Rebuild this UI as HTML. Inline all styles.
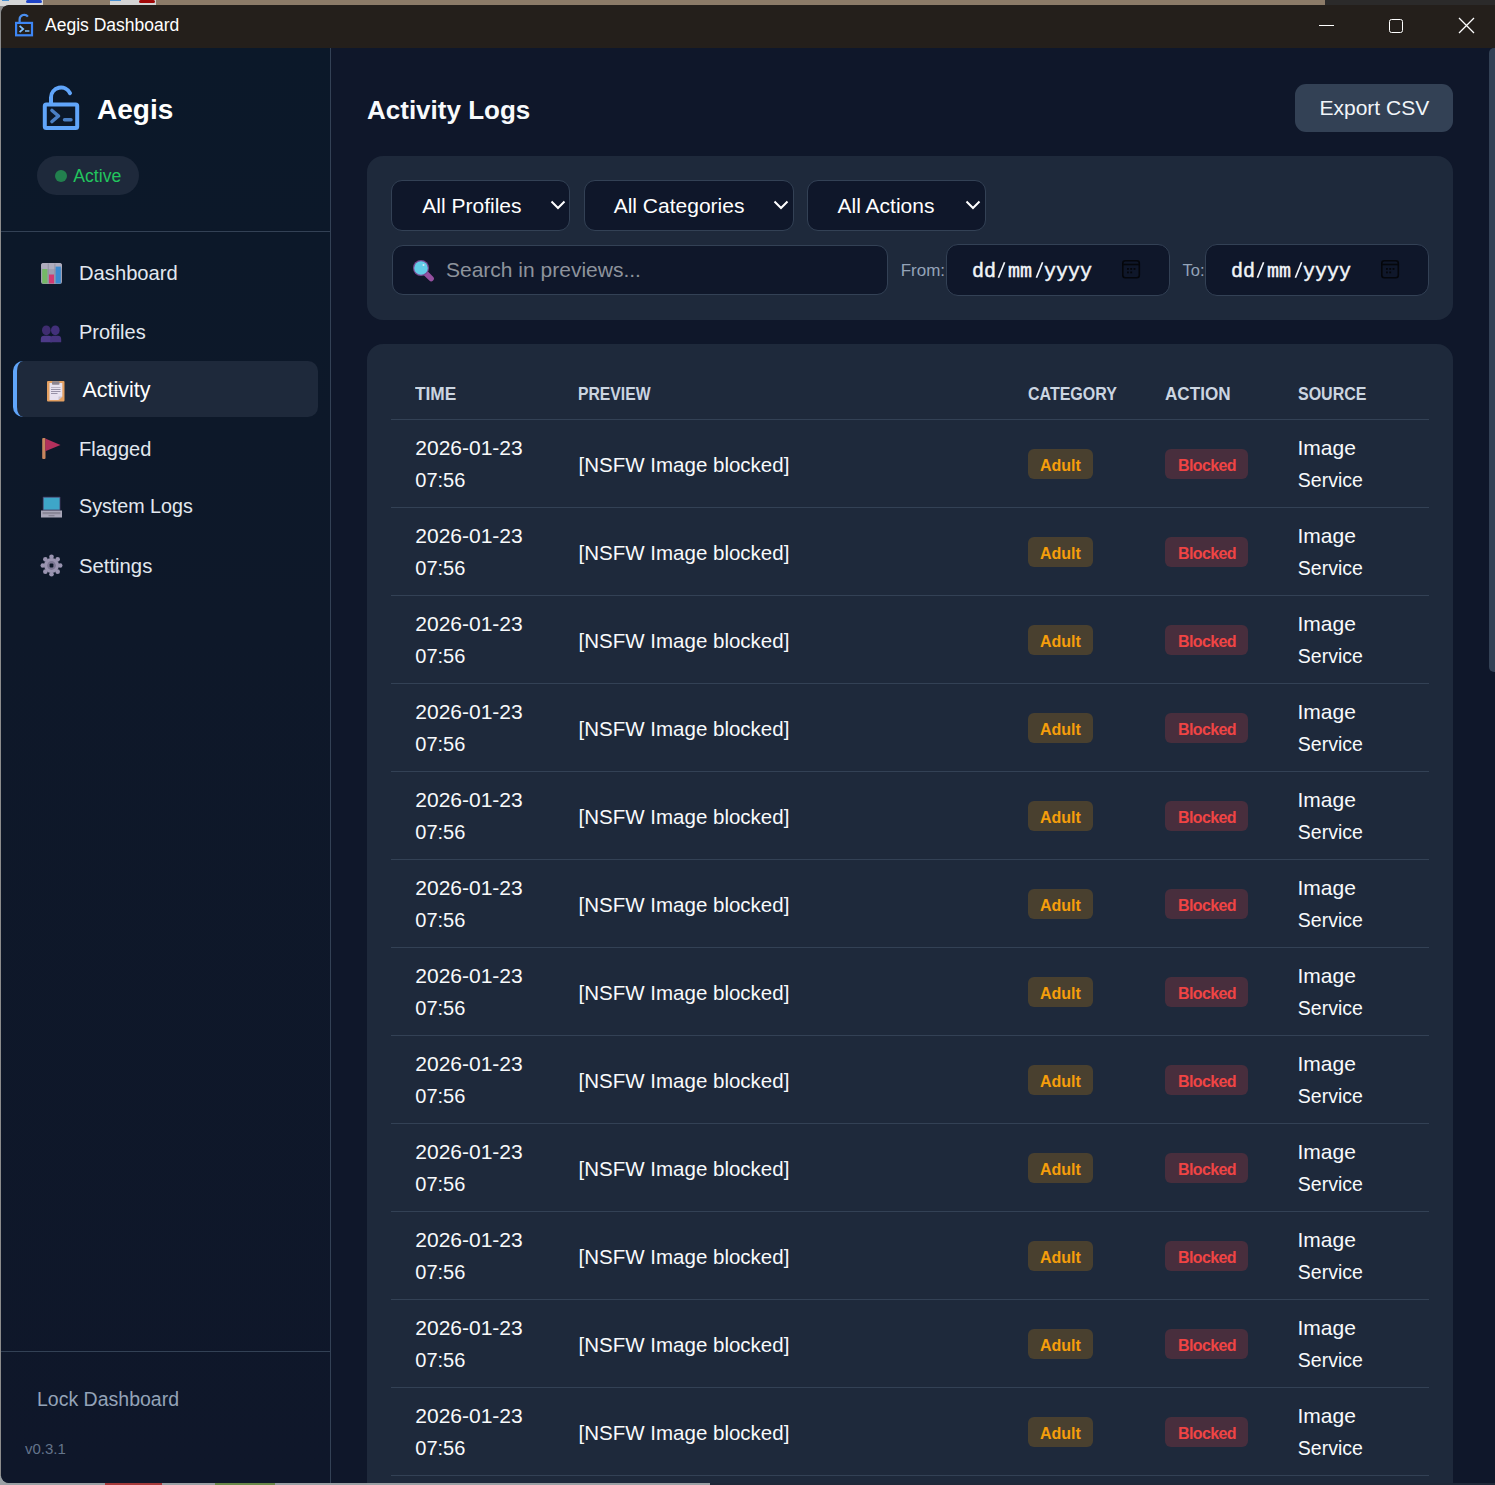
<!DOCTYPE html>
<html><head><meta charset="utf-8"><title>Aegis Dashboard</title>
<style>
html,body{margin:0;padding:0;}
body{width:1495px;height:1485px;position:relative;overflow:hidden;background:#8c8c8c;font-family:"Liberation Sans", sans-serif;}
.t{position:absolute;line-height:1;white-space:nowrap;}
.r{position:absolute;}
.a{position:absolute;overflow:visible;}
.sl{display:inline-block;width:12px;text-align:center;font-size:16px;vertical-align:0.5px;-webkit-text-stroke:0.2px #f1f5f9;}
.win{position:absolute;left:0;top:0;width:1495px;height:1485px;clip-path:inset(5px 0 2px 1px round 8px 0 0 8px);}
</style></head><body>
<div class="r" style="left:0px;top:0px;width:1495px;height:6px;background:#8c7b68;border-radius:0px;"></div>
<div class="r" style="left:0px;top:0px;width:43px;height:6px;background:#d6d6d6;border-radius:0px;"></div>
<div class="r" style="left:26px;top:0px;width:16px;height:3px;background:#1f44c8;border-radius:2px;"></div>
<div class="r" style="left:2px;top:0px;width:7px;height:1px;background:#4a90d0;border-radius:0px;"></div>
<div class="r" style="left:110px;top:0px;width:46px;height:6px;background:#d4d4d4;border-radius:0px;"></div>
<div class="r" style="left:139px;top:0px;width:16px;height:3px;background:#a00808;border-radius:2px;"></div>
<div class="r" style="left:110px;top:0px;width:11px;height:1px;background:#4a90d0;border-radius:0px;"></div>
<div class="r" style="left:1325px;top:0px;width:170px;height:6px;background:#2b2a2a;border-radius:0px;"></div>
<div class="r" style="left:0px;top:1476px;width:1495px;height:9px;background:#9aa0a4;border-radius:0px;"></div>
<div class="r" style="left:105px;top:1482px;width:57px;height:3px;background:#a83a3a;border-radius:0px;"></div>
<div class="r" style="left:215px;top:1482px;width:60px;height:3px;background:#6a8a4a;border-radius:0px;"></div>
<div class="r" style="left:710px;top:1482px;width:785px;height:3px;background:#1f2838;border-radius:0px;"></div>
<div class="win">
<div class="r" style="left:1px;top:5px;width:1500px;height:1478px;background:#0f172a;border-radius:8px;"></div>
<div class="r" style="left:1px;top:5px;width:1500px;height:43px;background:#241f1b;border-radius:0px;border-radius:8px 0 0 0;"></div>
<div class="r" style="left:1px;top:48px;width:330px;height:1435px;background:linear-gradient(180deg,#0b1829,#0e1829 40%,#0f172a);border-radius:0px;"></div>
<div class="r" style="left:330px;top:48px;width:1px;height:1435px;background:#334155;border-radius:0px;"></div>
<div class="r" style="left:1px;top:231px;width:329px;height:1px;background:#334155;border-radius:0px;"></div>
<div class="r" style="left:1px;top:1351px;width:329px;height:1px;background:#334155;border-radius:0px;"></div>
<div class="t" style="left:45px;top:16.98px;font-size:17.5px;color:#ffffff;">Aegis Dashboard</div>
<svg class="a" style="left:0;top:0" width="40" height="45" viewBox="0 0 40 45">
<path d="M19.6 22.9V19.2A4.6 4.6 0 0 1 27.9 16.7" fill="none" stroke="#4a8ff0" stroke-width="2.2"/>
<rect x="16.1" y="22.9" width="15.9" height="12.4" fill="none" stroke="#3d86f5" stroke-width="2.2"/>
<path d="M19.6 25.8L23.2 29L19.6 32.2" fill="none" stroke="#7fc0ff" stroke-width="1.8"/>
<path d="M25 31H29.4" stroke="#7fc0ff" stroke-width="1.6"/>
</svg>
<div class="r" style="left:1319px;top:25px;width:15px;height:1.3px;background:#ffffff;border-radius:0px;"></div>
<div class="r" style="left:1388.5px;top:18.5px;width:14.5px;height:14.5px;background:transparent;border-radius:2.5px;border:1.3px solid #fff;box-sizing:border-box;"></div>
<svg class="a" style="left:1458px;top:17px" width="17" height="17" viewBox="0 0 17 17"><path d="M1 1L16 16M16 1L1 16" stroke="#fff" stroke-width="1.3"/></svg>
<svg class="a" style="left:38px;top:80px" width="46" height="55" viewBox="38 80 46 55">
<path d="M51 103V97.5A10 10 0 0 1 70 93.2" fill="none" stroke="#60a5fa" stroke-width="4" stroke-linecap="round"/>
<rect x="44.8" y="104.5" width="32.4" height="23.6" rx="1.5" fill="none" stroke="#60a5fa" stroke-width="4"/>
<path d="M52 110.5L58.5 116L52 121.5" fill="none" stroke="#4a7fc4" stroke-width="3.6" stroke-linecap="round" stroke-linejoin="round"/>
<path d="M64.5 119.8H71" stroke="#4a7fc4" stroke-width="3.4" stroke-linecap="round"/>
</svg>
<div class="t" style="left:97px;top:96.29px;font-size:28px;color:#ffffff;font-weight:700;">Aegis</div>
<div class="r" style="left:37px;top:156px;width:102px;height:39px;background:#1e293b;border-radius:19.5px;"></div>
<div class="r" style="left:55px;top:170px;width:12px;height:12px;background:#22804e;border-radius:6px;"></div>
<div class="t" style="left:73.3px;top:168.10px;font-size:17.6px;color:#22c55e;">Active</div>
<div class="r" style="left:13px;top:361px;width:305px;height:56px;background:#1e293b;border-radius:10px;border-left:4px solid #60a5fa;box-sizing:border-box;"></div>
<div class="t" style="left:79px;top:263.10px;font-size:20.2px;color:#e2e8f0;">Dashboard</div>
<div class="t" style="left:79px;top:322.07px;font-size:20px;color:#e2e8f0;">Profiles</div>
<div class="t" style="left:82.5px;top:379.80px;font-size:21.5px;color:#ffffff;">Activity</div>
<div class="t" style="left:79px;top:438.77px;font-size:20px;color:#e2e8f0;">Flagged</div>
<div class="t" style="left:79px;top:497.32px;font-size:19.7px;color:#e2e8f0;">System Logs</div>
<div class="t" style="left:79px;top:555.81px;font-size:20.3px;color:#e2e8f0;">Settings</div>
<svg class="a" style="left:40px;top:262px" width="23" height="23" viewBox="0 0 23 23">
<rect x="1" y="1" width="21" height="21" rx="2.5" fill="#a09eb0"/>
<rect x="1" y="1" width="21" height="6" rx="2.5" fill="#aeacbd"/>
<rect x="7.8" y="1.5" width="0.8" height="20" fill="#8d8b9d"/><rect x="14.5" y="1.5" width="0.8" height="20" fill="#8d8b9d"/>
<rect x="2.2" y="7" width="5.2" height="14.5" fill="#74b866"/>
<rect x="9" y="12.5" width="5" height="9" fill="#d23a72"/>
<rect x="15.6" y="4.6" width="5.2" height="16.9" fill="#3a8ad0"/>
</svg>
<svg class="a" style="left:40px;top:325px" width="23" height="19" viewBox="0 0 23 19">
<ellipse cx="6.3" cy="5.3" rx="4.3" ry="4.9" fill="#3f2d70"/><ellipse cx="15.3" cy="5.3" rx="4.3" ry="4.9" fill="#42307a"/>
<path d="M0.8 17.3V14.2A3.4 3.4 0 0 1 4.2 10.8H8.6A3.4 3.4 0 0 1 12 14.2V17.3Z" fill="#4d3a88"/>
<path d="M10.2 17.3V14.2A3.4 3.4 0 0 1 13.6 10.8H17.8A3.4 3.4 0 0 1 21.2 14.2V17.3Z" fill="#46347e"/>
</svg>
<svg class="a" style="left:46px;top:379px" width="20" height="24" viewBox="0 0 20 24">
<rect x="1" y="2" width="17.5" height="20.5" rx="1" fill="#e3a062"/>
<path d="M3.5 4H16.3V17.5L12.5 21H3.5Z" fill="#e8e2f0"/>
<path d="M12.5 21V17.5H16.3Z" fill="#c9c4d4"/>
<rect x="6" y="2.2" width="7.5" height="3.5" rx="0.8" fill="#8d8590"/>
<rect x="5" y="8" width="9.5" height="1" fill="#b8b2c4"/><rect x="5" y="10" width="9.5" height="0.9" fill="#8f89a0"/><rect x="5" y="12" width="9.5" height="0.9" fill="#8f89a0"/><rect x="5" y="14" width="6.5" height="0.9" fill="#8f89a0"/>
</svg>
<svg class="a" style="left:41px;top:437px" width="22" height="24" viewBox="0 0 22 24">
<rect x="1.2" y="1" width="3.3" height="21" rx="1" fill="#c7865e"/>
<path d="M4.3 1.5L19.5 8L4.3 14.3Z" fill="#b3305c"/>
</svg>
<svg class="a" style="left:40px;top:496px" width="23" height="24" viewBox="0 0 23 24">
<rect x="2.8" y="0.8" width="17.6" height="13.6" rx="0.6" fill="#4a3f6a"/>
<rect x="3.6" y="1.6" width="16" height="12" fill="#3ea6c8"/>
<path d="M1 14.5H22V21.5H1Z" fill="#a8a6b8"/>
<rect x="2.5" y="16" width="18" height="2.2" fill="#8a8898"/>
<rect x="8.5" y="19" width="6" height="1.3" fill="#888696"/>
</svg>
<svg class="a" style="left:40px;top:554px" width="23" height="23" viewBox="0 0 23 23">
<g fill="#9a94b0">
<circle cx="11.5" cy="11.5" r="7.5"/>
<circle cx="11.5" cy="2.8" r="2.3"/><circle cx="11.5" cy="20.2" r="2.3"/><circle cx="2.8" cy="11.5" r="2.3"/><circle cx="20.2" cy="11.5" r="2.3"/>
<circle cx="5.35" cy="5.35" r="2.3"/><circle cx="17.65" cy="5.35" r="2.3"/><circle cx="5.35" cy="17.65" r="2.3"/><circle cx="17.65" cy="17.65" r="2.3"/>
</g>
<circle cx="11.5" cy="11.5" r="4.4" fill="#7d7894"/>
<rect x="9.6" y="9.6" width="3.8" height="3.8" rx="1" fill="#0e1829"/>
</svg>
<div class="t" style="left:37px;top:1389.79px;font-size:19.5px;color:#94a3b8;">Lock Dashboard</div>
<div class="t" style="left:25px;top:1440.90px;font-size:15px;color:#64748b;">v0.3.1</div>
<div class="t" style="left:367px;top:96.79px;font-size:26px;color:#f8fafc;font-weight:700;">Activity Logs</div>
<div class="r" style="left:1295px;top:84px;width:158px;height:48px;background:#334155;border-radius:11px;"></div>
<div class="t" style="left:1319.5px;top:97.02px;font-size:21px;color:#f1f5f9;">Export CSV</div>
<div class="r" style="left:367px;top:156px;width:1086px;height:164px;background:#1e293b;border-radius:16px;"></div>
<div class="r" style="left:391px;top:180px;width:179px;height:50.5px;background:#0f172a;border-radius:11px;border:1px solid #334155;box-sizing:border-box;"></div>
<div class="t" style="left:422.3px;top:195.22px;font-size:21px;color:#ffffff;">All Profiles</div>
<svg class="a" style="left:549.5px;top:198px" width="16" height="14" viewBox="0 0 16 14"><path d="M1.5 3.5L8 10L14.5 3.5" fill="none" stroke="#fff" stroke-width="2"/></svg>
<div class="r" style="left:583.5px;top:180px;width:210.0px;height:50.5px;background:#0f172a;border-radius:11px;border:1px solid #334155;box-sizing:border-box;"></div>
<div class="t" style="left:613.7px;top:195.22px;font-size:21px;color:#ffffff;">All Categories</div>
<svg class="a" style="left:773.0px;top:198px" width="16" height="14" viewBox="0 0 16 14"><path d="M1.5 3.5L8 10L14.5 3.5" fill="none" stroke="#fff" stroke-width="2"/></svg>
<div class="r" style="left:806.5px;top:180px;width:179.0px;height:50.5px;background:#0f172a;border-radius:11px;border:1px solid #334155;box-sizing:border-box;"></div>
<div class="t" style="left:837.6px;top:195.22px;font-size:21px;color:#ffffff;">All Actions</div>
<svg class="a" style="left:965.0px;top:198px" width="16" height="14" viewBox="0 0 16 14"><path d="M1.5 3.5L8 10L14.5 3.5" fill="none" stroke="#fff" stroke-width="2"/></svg>
<div class="r" style="left:391.5px;top:245px;width:496px;height:49.5px;background:#0f172a;border-radius:11px;border:1px solid #334155;box-sizing:border-box;"></div>
<svg class="a" style="left:410px;top:257px" width="26" height="26" viewBox="0 0 26 26">
<path d="M16 16.5L21.2 21.7" stroke="#9650a0" stroke-width="5.4" stroke-linecap="round"/>
<circle cx="11" cy="11" r="8" fill="#7a4a92"/>
<circle cx="11" cy="11" r="6.8" fill="#62cde8"/>
<circle cx="13.5" cy="8" r="1" fill="#d8e8f8"/>
</svg>
<div class="t" style="left:446px;top:258.97px;font-size:21px;color:#8d939c;">Search in previews...</div>
<div class="t" style="left:900.7px;top:261.51px;font-size:17px;color:#94a3b8;">From:</div>
<div class="t" style="left:1182.6px;top:261.93px;font-size:16.5px;color:#94a3b8;">To:</div>
<div class="r" style="left:945.5px;top:243.5px;width:224.0px;height:52px;background:#0f172a;border-radius:12px;border:1px solid #334155;box-sizing:border-box;"></div>
<div class="t" style="left:972px;top:261.58px;font-size:20px;color:#f1f5f9;font-family:'Liberation Mono', monospace;-webkit-text-stroke:0.45px #f1f5f9;">dd&nbsp;mm&nbsp;yyyy</div>
<svg class="a" style="left:995px;top:258px" width="12" height="24" viewBox="0 0 12 24"><path d="M9.6 4.3L3.4 19.7" stroke="#f1f5f9" stroke-width="1.7"/></svg>
<svg class="a" style="left:1033px;top:258px" width="12" height="24" viewBox="0 0 12 24"><path d="M9.6 4.3L3.4 19.7" stroke="#f1f5f9" stroke-width="1.7"/></svg>
<svg class="a" style="left:1121.2px;top:259px" width="21" height="21" viewBox="0 0 21 21">
<rect x="1.8" y="1.8" width="16.5" height="17" rx="2.5" fill="none" stroke="#05070c" stroke-width="1.6"/>
<path d="M1.8 5.5H18.3" stroke="#05070c" stroke-width="1.6"/>
<g fill="#05070c"><rect x="6" y="9" width="1.8" height="1.8"/><rect x="9.3" y="9" width="1.8" height="1.8"/><rect x="12.6" y="9" width="1.8" height="1.8"/><rect x="6" y="12.5" width="1.8" height="1.8"/><rect x="9.3" y="12.5" width="1.8" height="1.8"/></g>
</svg>
<div class="r" style="left:1204.5px;top:243.5px;width:224.0px;height:52px;background:#0f172a;border-radius:12px;border:1px solid #334155;box-sizing:border-box;"></div>
<div class="t" style="left:1231px;top:261.58px;font-size:20px;color:#f1f5f9;font-family:'Liberation Mono', monospace;-webkit-text-stroke:0.45px #f1f5f9;">dd&nbsp;mm&nbsp;yyyy</div>
<svg class="a" style="left:1254px;top:258px" width="12" height="24" viewBox="0 0 12 24"><path d="M9.6 4.3L3.4 19.7" stroke="#f1f5f9" stroke-width="1.7"/></svg>
<svg class="a" style="left:1292px;top:258px" width="12" height="24" viewBox="0 0 12 24"><path d="M9.6 4.3L3.4 19.7" stroke="#f1f5f9" stroke-width="1.7"/></svg>
<svg class="a" style="left:1380px;top:259px" width="21" height="21" viewBox="0 0 21 21">
<rect x="1.8" y="1.8" width="16.5" height="17" rx="2.5" fill="none" stroke="#05070c" stroke-width="1.6"/>
<path d="M1.8 5.5H18.3" stroke="#05070c" stroke-width="1.6"/>
<g fill="#05070c"><rect x="6" y="9" width="1.8" height="1.8"/><rect x="9.3" y="9" width="1.8" height="1.8"/><rect x="12.6" y="9" width="1.8" height="1.8"/><rect x="6" y="12.5" width="1.8" height="1.8"/><rect x="9.3" y="12.5" width="1.8" height="1.8"/></g>
</svg>
<div class="r" style="left:367px;top:344px;width:1086px;height:1200px;background:#1e293b;border-radius:16px;"></div>
<div class="t" style="left:415.3px;top:385.45px;font-size:18.6px;color:#cbd5e1;font-weight:700;transform:scaleX(0.93);transform-origin:0 0;">TIME</div>
<div class="t" style="left:577.6px;top:385.45px;font-size:18.6px;color:#cbd5e1;font-weight:700;transform:scaleX(0.845);transform-origin:0 0;">PREVIEW</div>
<div class="t" style="left:1028.3px;top:385.45px;font-size:18.6px;color:#cbd5e1;font-weight:700;transform:scaleX(0.86);transform-origin:0 0;">CATEGORY</div>
<div class="t" style="left:1165.2px;top:385.45px;font-size:18.6px;color:#cbd5e1;font-weight:700;transform:scaleX(0.92);transform-origin:0 0;">ACTION</div>
<div class="t" style="left:1297.8px;top:385.45px;font-size:18.6px;color:#cbd5e1;font-weight:700;transform:scaleX(0.86);transform-origin:0 0;">SOURCE</div>
<div class="r" style="left:391px;top:419px;width:1038px;height:1px;background:#334155;border-radius:0px;"></div>
<div class="t" style="left:415.3px;top:437.22px;font-size:21px;color:#f8fafc;">2026-01-23</div>
<div class="t" style="left:415.3px;top:470.27px;font-size:20px;color:#f8fafc;">07:56</div>
<div class="t" style="left:578.6px;top:454.84px;font-size:20.5px;color:#f8fafc;">[NSFW Image blocked]</div>
<div class="r" style="left:1028.3px;top:449px;width:64.6px;height:30.2px;background:#49402f;border-radius:6px;"></div>
<div class="t" style="left:1040px;top:458.25px;font-size:16px;color:#f59e0b;font-weight:700;">Adult</div>
<div class="r" style="left:1165.2px;top:449px;width:82.8px;height:30.2px;background:#482e3d;border-radius:6px;"></div>
<div class="t" style="left:1178px;top:458.25px;font-size:16px;color:#ef4444;font-weight:700;letter-spacing:-0.62px;">Blocked</div>
<div class="t" style="left:1297.5px;top:436.72px;font-size:21px;color:#f8fafc;">Image</div>
<div class="t" style="left:1297.8px;top:470.69px;font-size:19.5px;color:#f8fafc;">Service</div>
<div class="r" style="left:391px;top:507px;width:1038px;height:1px;background:#334155;border-radius:0px;"></div>
<div class="t" style="left:415.3px;top:525.22px;font-size:21px;color:#f8fafc;">2026-01-23</div>
<div class="t" style="left:415.3px;top:558.27px;font-size:20px;color:#f8fafc;">07:56</div>
<div class="t" style="left:578.6px;top:542.84px;font-size:20.5px;color:#f8fafc;">[NSFW Image blocked]</div>
<div class="r" style="left:1028.3px;top:537px;width:64.6px;height:30.2px;background:#49402f;border-radius:6px;"></div>
<div class="t" style="left:1040px;top:546.25px;font-size:16px;color:#f59e0b;font-weight:700;">Adult</div>
<div class="r" style="left:1165.2px;top:537px;width:82.8px;height:30.2px;background:#482e3d;border-radius:6px;"></div>
<div class="t" style="left:1178px;top:546.25px;font-size:16px;color:#ef4444;font-weight:700;letter-spacing:-0.62px;">Blocked</div>
<div class="t" style="left:1297.5px;top:524.72px;font-size:21px;color:#f8fafc;">Image</div>
<div class="t" style="left:1297.8px;top:558.69px;font-size:19.5px;color:#f8fafc;">Service</div>
<div class="r" style="left:391px;top:595px;width:1038px;height:1px;background:#334155;border-radius:0px;"></div>
<div class="t" style="left:415.3px;top:613.22px;font-size:21px;color:#f8fafc;">2026-01-23</div>
<div class="t" style="left:415.3px;top:646.27px;font-size:20px;color:#f8fafc;">07:56</div>
<div class="t" style="left:578.6px;top:630.84px;font-size:20.5px;color:#f8fafc;">[NSFW Image blocked]</div>
<div class="r" style="left:1028.3px;top:625px;width:64.6px;height:30.2px;background:#49402f;border-radius:6px;"></div>
<div class="t" style="left:1040px;top:634.25px;font-size:16px;color:#f59e0b;font-weight:700;">Adult</div>
<div class="r" style="left:1165.2px;top:625px;width:82.8px;height:30.2px;background:#482e3d;border-radius:6px;"></div>
<div class="t" style="left:1178px;top:634.25px;font-size:16px;color:#ef4444;font-weight:700;letter-spacing:-0.62px;">Blocked</div>
<div class="t" style="left:1297.5px;top:612.72px;font-size:21px;color:#f8fafc;">Image</div>
<div class="t" style="left:1297.8px;top:646.69px;font-size:19.5px;color:#f8fafc;">Service</div>
<div class="r" style="left:391px;top:683px;width:1038px;height:1px;background:#334155;border-radius:0px;"></div>
<div class="t" style="left:415.3px;top:701.22px;font-size:21px;color:#f8fafc;">2026-01-23</div>
<div class="t" style="left:415.3px;top:734.27px;font-size:20px;color:#f8fafc;">07:56</div>
<div class="t" style="left:578.6px;top:718.84px;font-size:20.5px;color:#f8fafc;">[NSFW Image blocked]</div>
<div class="r" style="left:1028.3px;top:713px;width:64.6px;height:30.2px;background:#49402f;border-radius:6px;"></div>
<div class="t" style="left:1040px;top:722.25px;font-size:16px;color:#f59e0b;font-weight:700;">Adult</div>
<div class="r" style="left:1165.2px;top:713px;width:82.8px;height:30.2px;background:#482e3d;border-radius:6px;"></div>
<div class="t" style="left:1178px;top:722.25px;font-size:16px;color:#ef4444;font-weight:700;letter-spacing:-0.62px;">Blocked</div>
<div class="t" style="left:1297.5px;top:700.72px;font-size:21px;color:#f8fafc;">Image</div>
<div class="t" style="left:1297.8px;top:734.69px;font-size:19.5px;color:#f8fafc;">Service</div>
<div class="r" style="left:391px;top:771px;width:1038px;height:1px;background:#334155;border-radius:0px;"></div>
<div class="t" style="left:415.3px;top:789.22px;font-size:21px;color:#f8fafc;">2026-01-23</div>
<div class="t" style="left:415.3px;top:822.27px;font-size:20px;color:#f8fafc;">07:56</div>
<div class="t" style="left:578.6px;top:806.84px;font-size:20.5px;color:#f8fafc;">[NSFW Image blocked]</div>
<div class="r" style="left:1028.3px;top:801px;width:64.6px;height:30.2px;background:#49402f;border-radius:6px;"></div>
<div class="t" style="left:1040px;top:810.25px;font-size:16px;color:#f59e0b;font-weight:700;">Adult</div>
<div class="r" style="left:1165.2px;top:801px;width:82.8px;height:30.2px;background:#482e3d;border-radius:6px;"></div>
<div class="t" style="left:1178px;top:810.25px;font-size:16px;color:#ef4444;font-weight:700;letter-spacing:-0.62px;">Blocked</div>
<div class="t" style="left:1297.5px;top:788.72px;font-size:21px;color:#f8fafc;">Image</div>
<div class="t" style="left:1297.8px;top:822.69px;font-size:19.5px;color:#f8fafc;">Service</div>
<div class="r" style="left:391px;top:859px;width:1038px;height:1px;background:#334155;border-radius:0px;"></div>
<div class="t" style="left:415.3px;top:877.22px;font-size:21px;color:#f8fafc;">2026-01-23</div>
<div class="t" style="left:415.3px;top:910.27px;font-size:20px;color:#f8fafc;">07:56</div>
<div class="t" style="left:578.6px;top:894.84px;font-size:20.5px;color:#f8fafc;">[NSFW Image blocked]</div>
<div class="r" style="left:1028.3px;top:889px;width:64.6px;height:30.2px;background:#49402f;border-radius:6px;"></div>
<div class="t" style="left:1040px;top:898.25px;font-size:16px;color:#f59e0b;font-weight:700;">Adult</div>
<div class="r" style="left:1165.2px;top:889px;width:82.8px;height:30.2px;background:#482e3d;border-radius:6px;"></div>
<div class="t" style="left:1178px;top:898.25px;font-size:16px;color:#ef4444;font-weight:700;letter-spacing:-0.62px;">Blocked</div>
<div class="t" style="left:1297.5px;top:876.72px;font-size:21px;color:#f8fafc;">Image</div>
<div class="t" style="left:1297.8px;top:910.69px;font-size:19.5px;color:#f8fafc;">Service</div>
<div class="r" style="left:391px;top:947px;width:1038px;height:1px;background:#334155;border-radius:0px;"></div>
<div class="t" style="left:415.3px;top:965.22px;font-size:21px;color:#f8fafc;">2026-01-23</div>
<div class="t" style="left:415.3px;top:998.27px;font-size:20px;color:#f8fafc;">07:56</div>
<div class="t" style="left:578.6px;top:982.84px;font-size:20.5px;color:#f8fafc;">[NSFW Image blocked]</div>
<div class="r" style="left:1028.3px;top:977px;width:64.6px;height:30.2px;background:#49402f;border-radius:6px;"></div>
<div class="t" style="left:1040px;top:986.25px;font-size:16px;color:#f59e0b;font-weight:700;">Adult</div>
<div class="r" style="left:1165.2px;top:977px;width:82.8px;height:30.2px;background:#482e3d;border-radius:6px;"></div>
<div class="t" style="left:1178px;top:986.25px;font-size:16px;color:#ef4444;font-weight:700;letter-spacing:-0.62px;">Blocked</div>
<div class="t" style="left:1297.5px;top:964.72px;font-size:21px;color:#f8fafc;">Image</div>
<div class="t" style="left:1297.8px;top:998.69px;font-size:19.5px;color:#f8fafc;">Service</div>
<div class="r" style="left:391px;top:1035px;width:1038px;height:1px;background:#334155;border-radius:0px;"></div>
<div class="t" style="left:415.3px;top:1053.22px;font-size:21px;color:#f8fafc;">2026-01-23</div>
<div class="t" style="left:415.3px;top:1086.27px;font-size:20px;color:#f8fafc;">07:56</div>
<div class="t" style="left:578.6px;top:1070.84px;font-size:20.5px;color:#f8fafc;">[NSFW Image blocked]</div>
<div class="r" style="left:1028.3px;top:1065px;width:64.6px;height:30.2px;background:#49402f;border-radius:6px;"></div>
<div class="t" style="left:1040px;top:1074.25px;font-size:16px;color:#f59e0b;font-weight:700;">Adult</div>
<div class="r" style="left:1165.2px;top:1065px;width:82.8px;height:30.2px;background:#482e3d;border-radius:6px;"></div>
<div class="t" style="left:1178px;top:1074.25px;font-size:16px;color:#ef4444;font-weight:700;letter-spacing:-0.62px;">Blocked</div>
<div class="t" style="left:1297.5px;top:1052.72px;font-size:21px;color:#f8fafc;">Image</div>
<div class="t" style="left:1297.8px;top:1086.69px;font-size:19.5px;color:#f8fafc;">Service</div>
<div class="r" style="left:391px;top:1123px;width:1038px;height:1px;background:#334155;border-radius:0px;"></div>
<div class="t" style="left:415.3px;top:1141.22px;font-size:21px;color:#f8fafc;">2026-01-23</div>
<div class="t" style="left:415.3px;top:1174.27px;font-size:20px;color:#f8fafc;">07:56</div>
<div class="t" style="left:578.6px;top:1158.84px;font-size:20.5px;color:#f8fafc;">[NSFW Image blocked]</div>
<div class="r" style="left:1028.3px;top:1153px;width:64.6px;height:30.2px;background:#49402f;border-radius:6px;"></div>
<div class="t" style="left:1040px;top:1162.25px;font-size:16px;color:#f59e0b;font-weight:700;">Adult</div>
<div class="r" style="left:1165.2px;top:1153px;width:82.8px;height:30.2px;background:#482e3d;border-radius:6px;"></div>
<div class="t" style="left:1178px;top:1162.25px;font-size:16px;color:#ef4444;font-weight:700;letter-spacing:-0.62px;">Blocked</div>
<div class="t" style="left:1297.5px;top:1140.72px;font-size:21px;color:#f8fafc;">Image</div>
<div class="t" style="left:1297.8px;top:1174.69px;font-size:19.5px;color:#f8fafc;">Service</div>
<div class="r" style="left:391px;top:1211px;width:1038px;height:1px;background:#334155;border-radius:0px;"></div>
<div class="t" style="left:415.3px;top:1229.22px;font-size:21px;color:#f8fafc;">2026-01-23</div>
<div class="t" style="left:415.3px;top:1262.27px;font-size:20px;color:#f8fafc;">07:56</div>
<div class="t" style="left:578.6px;top:1246.84px;font-size:20.5px;color:#f8fafc;">[NSFW Image blocked]</div>
<div class="r" style="left:1028.3px;top:1241px;width:64.6px;height:30.2px;background:#49402f;border-radius:6px;"></div>
<div class="t" style="left:1040px;top:1250.25px;font-size:16px;color:#f59e0b;font-weight:700;">Adult</div>
<div class="r" style="left:1165.2px;top:1241px;width:82.8px;height:30.2px;background:#482e3d;border-radius:6px;"></div>
<div class="t" style="left:1178px;top:1250.25px;font-size:16px;color:#ef4444;font-weight:700;letter-spacing:-0.62px;">Blocked</div>
<div class="t" style="left:1297.5px;top:1228.72px;font-size:21px;color:#f8fafc;">Image</div>
<div class="t" style="left:1297.8px;top:1262.69px;font-size:19.5px;color:#f8fafc;">Service</div>
<div class="r" style="left:391px;top:1299px;width:1038px;height:1px;background:#334155;border-radius:0px;"></div>
<div class="t" style="left:415.3px;top:1317.22px;font-size:21px;color:#f8fafc;">2026-01-23</div>
<div class="t" style="left:415.3px;top:1350.27px;font-size:20px;color:#f8fafc;">07:56</div>
<div class="t" style="left:578.6px;top:1334.84px;font-size:20.5px;color:#f8fafc;">[NSFW Image blocked]</div>
<div class="r" style="left:1028.3px;top:1329px;width:64.6px;height:30.2px;background:#49402f;border-radius:6px;"></div>
<div class="t" style="left:1040px;top:1338.25px;font-size:16px;color:#f59e0b;font-weight:700;">Adult</div>
<div class="r" style="left:1165.2px;top:1329px;width:82.8px;height:30.2px;background:#482e3d;border-radius:6px;"></div>
<div class="t" style="left:1178px;top:1338.25px;font-size:16px;color:#ef4444;font-weight:700;letter-spacing:-0.62px;">Blocked</div>
<div class="t" style="left:1297.5px;top:1316.72px;font-size:21px;color:#f8fafc;">Image</div>
<div class="t" style="left:1297.8px;top:1350.69px;font-size:19.5px;color:#f8fafc;">Service</div>
<div class="r" style="left:391px;top:1387px;width:1038px;height:1px;background:#334155;border-radius:0px;"></div>
<div class="t" style="left:415.3px;top:1405.22px;font-size:21px;color:#f8fafc;">2026-01-23</div>
<div class="t" style="left:415.3px;top:1438.27px;font-size:20px;color:#f8fafc;">07:56</div>
<div class="t" style="left:578.6px;top:1422.84px;font-size:20.5px;color:#f8fafc;">[NSFW Image blocked]</div>
<div class="r" style="left:1028.3px;top:1417px;width:64.6px;height:30.2px;background:#49402f;border-radius:6px;"></div>
<div class="t" style="left:1040px;top:1426.25px;font-size:16px;color:#f59e0b;font-weight:700;">Adult</div>
<div class="r" style="left:1165.2px;top:1417px;width:82.8px;height:30.2px;background:#482e3d;border-radius:6px;"></div>
<div class="t" style="left:1178px;top:1426.25px;font-size:16px;color:#ef4444;font-weight:700;letter-spacing:-0.62px;">Blocked</div>
<div class="t" style="left:1297.5px;top:1404.72px;font-size:21px;color:#f8fafc;">Image</div>
<div class="t" style="left:1297.8px;top:1438.69px;font-size:19.5px;color:#f8fafc;">Service</div>
<div class="r" style="left:391px;top:1475px;width:1038px;height:1px;background:#334155;border-radius:0px;"></div>
<div class="r" style="left:1489px;top:48px;width:10px;height:624px;background:#334155;border-radius:5px;"></div>
</div>
</body></html>
